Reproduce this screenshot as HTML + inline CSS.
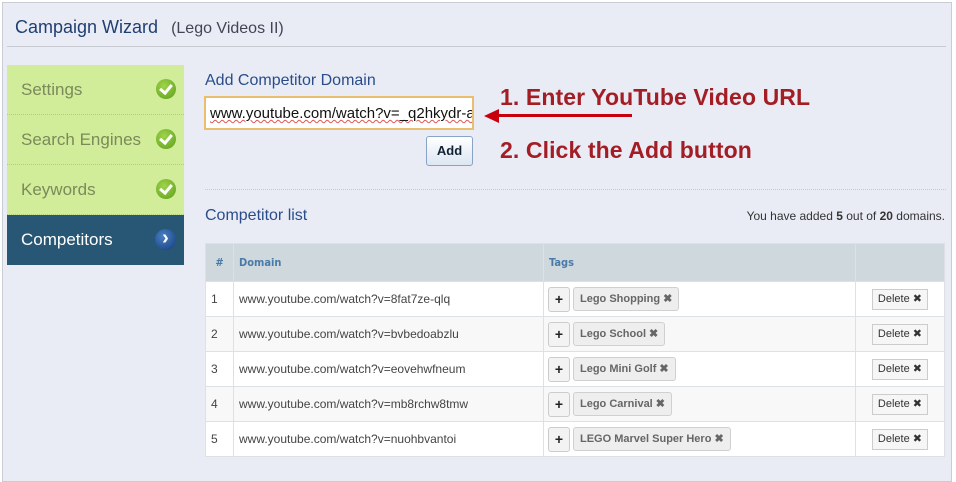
<!DOCTYPE html>
<html><head><style>
*{margin:0;padding:0;box-sizing:border-box}
body{width:956px;height:458px;background:#fff;font-family:"Liberation Sans",sans-serif;position:relative;overflow:hidden}
.a{position:absolute}
.page{left:2px;top:2px;width:950px;height:480px;background:#e9ecf5;border:1px solid #c9ccd4}
.side div.it{position:absolute;left:7px;width:177px;height:50px;background:#d2ed9a;border-bottom:1px dotted #b5c98a;color:#7a8a5a;font-size:17px;padding:15px 0 0 14px}
.chk{position:absolute;right:8px;top:14px;width:20px;height:20px;border-radius:50%;background:radial-gradient(circle at 40% 35%,#9ed44a,#5e9e1a);}
.chk:after{content:"";position:absolute;left:6px;top:3px;width:5px;height:9px;border:solid #fff;border-width:0 3px 3px 0;transform:rotate(40deg)}
table{position:absolute;left:205px;top:243px;width:740px;border-collapse:collapse;font-size:12px;color:#444}
td,th{border:1px solid #dde1e6;padding:0 5px;height:35px;text-align:left}
th{background:#cfd8dd;color:#4a7aa8;font-weight:bold;height:38px;font-size:11px;font-family:"DejaVu Sans Condensed","Liberation Sans",sans-serif}
tr:nth-child(odd) td{background:#f7f7f7} tr:nth-child(even) td{background:#fff}
.pl{display:inline-block;width:22px;height:25px;border:1px solid #ccc;border-radius:3px;background:#f3f3f3;text-align:center;line-height:22px;font-weight:bold;font-size:14px;color:#222;vertical-align:middle;margin-left:-1px}
.tg{display:inline-block;height:24px;border:1px solid #d0d0d0;border-radius:3px;background:#eee;padding:0 6px;line-height:22px;font-size:11px;font-weight:bold;color:#666;margin-left:3px;vertical-align:middle}
.del{float:right;height:21px;border:1px solid #ccc;background:#f6f6f6;padding:0 5px;line-height:19px;font-size:11px;color:#333;margin-right:11px}
</style></head><body>
<div class="a page"></div>
<div class="a" style="left:15px;top:17px;font-size:18px;color:#1f3f72">Campaign Wizard <span style="font-size:16px;color:#445;margin-left:8px">(Lego Videos II)</span></div>
<div class="a" style="left:7px;top:46px;width:939px;height:1px;background:#c8cbd2"></div>
<div class="side">
<div class="it" style="top:65px">Settings<span class="chk"></span></div>
<div class="it" style="top:115px">Search Engines<span class="chk"></span></div>
<div class="it" style="top:165px">Keywords<span class="chk"></span></div>
<div class="it" style="top:215px;background:#275775;color:#fff;border:none">Competitors<span style="position:absolute;right:8px;top:14px;width:21px;height:21px;border-radius:50%;background:radial-gradient(circle at 40% 35%,#4b7fc4,#123d7a);color:#fff;font-size:20px;text-align:center;line-height:19px;font-weight:bold">›</span></div>
</div>
<div class="a" style="left:205px;top:72px;font-size:16px;color:#2a4d8a">Add Competitor Domain</div>
<div class="a" style="left:204px;top:96px;width:270px;height:34px;border:2px solid #e9bf6f;background:#fff;font-size:15px;padding:7px 0 0 4px;color:#111;white-space:nowrap;overflow:hidden;text-decoration:underline wavy #d55;text-decoration-thickness:1px">www.youtube.com/watch?v=_q2hkydr-a</div>
<div class="a" style="left:426px;top:136px;width:47px;height:30px;border:1px solid #88a4c4;border-radius:3px;background:linear-gradient(#fff,#dde6f2);font-weight:bold;font-size:13px;color:#123;text-align:center;line-height:28px">Add</div>
<div class="a" style="left:500px;top:84px;font-size:23px;font-weight:bold;color:#a31d25;letter-spacing:0.1px">1. Enter YouTube Video URL</div>
<div class="a" style="left:500px;top:137px;font-size:23px;font-weight:bold;color:#a31d25;letter-spacing:0.1px">2. Click the Add button</div>
<div class="a" style="left:497px;top:114px;width:135px;height:3px;background:#c8000d"></div>
<div class="a" style="left:484px;top:109px;width:0;height:0;border-top:7px solid transparent;border-bottom:7px solid transparent;border-right:15px solid #c8000d"></div>
<div class="a" style="left:205px;top:189px;width:741px;border-top:1px dotted #c5c8d0"></div>
<div class="a" style="left:205px;top:207px;font-size:16px;color:#2a4d8a">Competitor list</div>
<div class="a" style="right:11px;top:209px;font-size:12px;color:#333">You have added <b>5</b> out of <b>20</b> domains.</div>
<table>
<tr><th style="width:28px;text-align:center">#</th><th style="width:310px">Domain</th><th style="width:312px">Tags</th><th></th></tr>
<tr><td>1</td><td>www.youtube.com/watch?v=8fat7ze-qlq</td><td><span class="pl">+</span><span class="tg">Lego Shopping ✖</span></td><td><span class="del">Delete ✖</span></td></tr>
<tr><td>2</td><td>www.youtube.com/watch?v=bvbedoabzlu</td><td><span class="pl">+</span><span class="tg">Lego School ✖</span></td><td><span class="del">Delete ✖</span></td></tr>
<tr><td>3</td><td>www.youtube.com/watch?v=eovehwfneum</td><td><span class="pl">+</span><span class="tg">Lego Mini Golf ✖</span></td><td><span class="del">Delete ✖</span></td></tr>
<tr><td>4</td><td>www.youtube.com/watch?v=mb8rchw8tmw</td><td><span class="pl">+</span><span class="tg">Lego Carnival ✖</span></td><td><span class="del">Delete ✖</span></td></tr>
<tr><td>5</td><td>www.youtube.com/watch?v=nuohbvantoi</td><td><span class="pl">+</span><span class="tg">LEGO Marvel Super Hero ✖</span></td><td><span class="del">Delete ✖</span></td></tr>
</table>
<style>tr:nth-child(even) td{background:#fff}tr:nth-child(odd) td{background:#f9f9f9}tr:nth-child(2) td,tr:nth-child(4) td,tr:nth-child(6) td{background:#fff}tr:nth-child(3) td,tr:nth-child(5) td{background:#f8f8f8}</style>
</body></html>
